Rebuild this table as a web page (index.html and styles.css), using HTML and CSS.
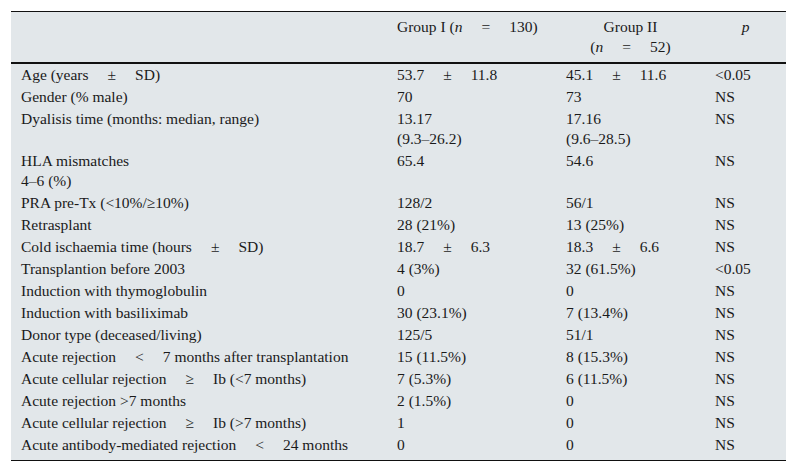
FILE: index.html
```
<!DOCTYPE html>
<html>
<head>
<meta charset="utf-8">
<link rel="stylesheet" href="styles.css">
</head>
<body>
<div class="wrap">
<table class="tbl">
<colgroup>
<col class="c-label"><col class="c-g1"><col class="c-g2"><col class="c-p">
</colgroup>
<thead>
<tr>
<th class="h-label"></th>
<th class="h-g1">Group I (<i>n</i><span class="op">=</span>130)</th>
<th class="h-g2">Group II<br>(<i>n</i><span class="op">=</span>52)</th>
<th class="h-p"><i>p</i></th>
</tr>
</thead>
<tbody>
<tr><td>Age (years<span class="op">±</span>SD)</td><td>53.7<span class="op">±</span>11.8</td><td>45.1<span class="op">±</span>11.6</td><td>&lt;0.05</td></tr>
<tr><td>Gender (% male)</td><td>70</td><td>73</td><td>NS</td></tr>
<tr><td>Dyalisis time (months: median, range)</td><td>13.17<br>(9.3–26.2)</td><td>17.16<br>(9.6–28.5)</td><td>NS</td></tr>
<tr><td>HLA mismatches<br>4–6 (%)</td><td>65.4</td><td>54.6</td><td>NS</td></tr>
<tr><td>PRA pre-Tx (&lt;10%/≥10%)</td><td>128/2</td><td>56/1</td><td>NS</td></tr>
<tr><td>Retrasplant</td><td>28 (21%)</td><td>13 (25%)</td><td>NS</td></tr>
<tr><td>Cold ischaemia time (hours<span class="op">±</span>SD)</td><td>18.7<span class="op">±</span>6.3</td><td>18.3<span class="op">±</span>6.6</td><td>NS</td></tr>
<tr><td>Transplantion before 2003</td><td>4 (3%)</td><td>32 (61.5%)</td><td>&lt;0.05</td></tr>
<tr><td>Induction with thymoglobulin</td><td>0</td><td>0</td><td>NS</td></tr>
<tr><td>Induction with basiliximab</td><td>30 (23.1%)</td><td>7 (13.4%)</td><td>NS</td></tr>
<tr><td>Donor type (deceased/living)</td><td>125/5</td><td>51/1</td><td>NS</td></tr>
<tr><td>Acute rejection<span class="op">&lt;</span>7 months after transplantation</td><td>15 (11.5%)</td><td>8 (15.3%)</td><td>NS</td></tr>
<tr><td>Acute cellular rejection<span class="op">≥</span>Ib (&lt;7 months)</td><td>7 (5.3%)</td><td>6 (11.5%)</td><td>NS</td></tr>
<tr><td>Acute rejection &gt;7 months</td><td>2 (1.5%)</td><td>0</td><td>NS</td></tr>
<tr><td>Acute cellular rejection<span class="op">≥</span>Ib (&gt;7 months)</td><td>1</td><td>0</td><td>NS</td></tr>
<tr class="last"><td>Acute antibody-mediated rejection<span class="op">&lt;</span>24 months</td><td>0</td><td>0</td><td>NS</td></tr>
</tbody>
</table>
</div>
</body>
</html>
```
FILE: styles.css
```
html, body {
  margin: 0;
  padding: 0;
  background: #ffffff;
}
.wrap {
  padding: 11px 11px 0 11px;
}
.tbl {
  width: 775px;
  border-collapse: collapse;
  background: #e2e7ea;
  font-family: "Liberation Serif", "Times New Roman", serif;
  font-size: 15.5px;
  line-height: 20px;
  color: #1a1a1a;
  border-top: 1px solid #111;
  border-bottom: 1px solid #111;
  table-layout: fixed;
}
.c-label { width: 376px; }
.c-g1 { width: 169px; }
.c-g2 { width: 149px; }
.c-p { width: 81px; }
.tbl th {
  font-weight: normal;
  padding: 5px 10px 5px 10px;
  vertical-align: top;
  border-bottom: 2px solid #111;
  white-space: nowrap;
}
.h-g1 { text-align: left; }
.h-g2 { text-align: center; }
.h-p { text-align: center; }
.tbl td {
  padding: 1px 10px;
  vertical-align: top;
  text-align: left;
  white-space: nowrap;
}
.tbl .last td {
  padding-bottom: 5px;
}
.op {
  margin: 0 19px;
}
```
